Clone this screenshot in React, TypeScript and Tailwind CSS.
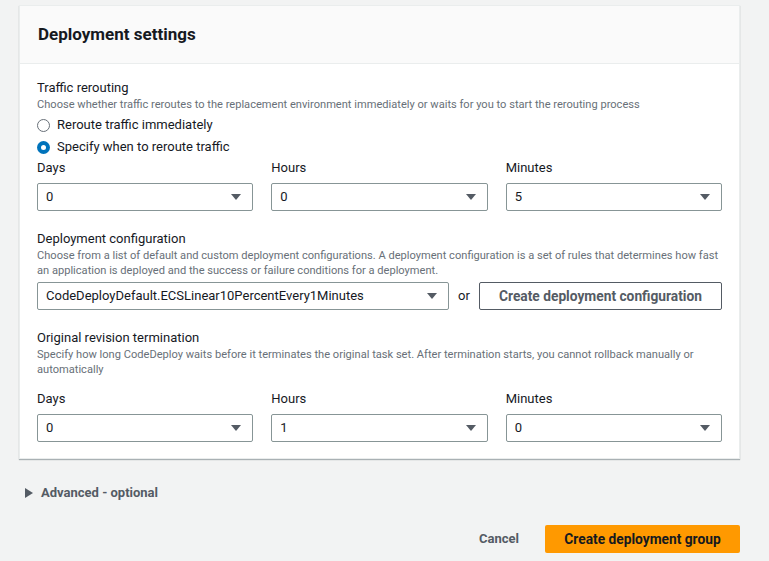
function Caret() {
  return (
    <svg width="12" height="8" viewBox="0 0 12 8" className="shrink-0">
      <path d="M1 1h10L6 7z" fill="#545b64" />
    </svg>
  );
}

function Select({ value, className = "" }: { value: string; className?: string }) {
  return (
    <div
      className={`flex h-[28px] items-center justify-between rounded-[2px] border border-[#879596] bg-white pl-[8px] pr-[10px] text-[13px] text-[#16191f] ${className}`}
    >
      <span>{value}</span>
      <Caret />
    </div>
  );
}

function TimeRow({ values, className = "" }: { values: string[]; className?: string }) {
  const labels = ["Days", "Hours", "Minutes"];
  return (
    <div className={`grid grid-cols-3 gap-x-[18px] ${className}`}>
      {labels.map((l, i) => (
        <div key={l}>
          <div className="h-[19px] pt-[1px] text-[13px] leading-[18px] text-[#16191f]">{l}</div>
          <Select value={values[i]} className="mt-[6px]" />
        </div>
      ))}
    </div>
  );
}

function Radio({ checked, label }: { checked?: boolean; label: string }) {
  return (
    <div className="flex h-[22px] items-center gap-[7px]">
      {checked ? (
        <span className="flex h-[13px] w-[13px] items-center justify-center rounded-full bg-[#0073bb]">
          <span className="h-[5px] w-[5px] rounded-full bg-white" />
        </span>
      ) : (
        <span className="h-[13px] w-[13px] rounded-full border border-[#687078] bg-white" />
      )}
      <span className="text-[13px] text-[#16191f]">{label}</span>
    </div>
  );
}

export default function App() {
  return (
    <main
      className="min-h-[561px] bg-[#f2f3f3] pl-[19px] pt-[5px]"
      style={{ fontFamily: "Roboto, 'Liberation Sans', sans-serif" }}
    >
      <section className="w-[721px] border border-[#eaeded] bg-white shadow-[0_1px_1px_0_rgba(0,28,36,0.3)]">
        <header className="flex h-[58px] items-center border-b border-[#eaeded] bg-[#fafafa] px-[18px]">
          <h2 className="text-[17px] font-bold text-[#16191f]">Deployment settings</h2>
        </header>

        <div className="px-[17px] pb-[16px] pt-[15px]">
          <div className="text-[13px] leading-[18px] text-[#16191f]">Traffic rerouting</div>
          <p className="text-[11.1px] leading-[15px] text-[#687078]">
            Choose whether traffic reroutes to the replacement environment immediately or waits for you to start the rerouting process
          </p>
          <div className="mt-[2px]">
            <Radio label="Reroute traffic immediately" />
            <Radio checked label="Specify when to reroute traffic" />
          </div>
          <TimeRow values={["0", "0", "5"]} />

          <div className="mt-[19px] text-[13px] leading-[18px] text-[#16191f]">Deployment configuration</div>
          <p className="text-[11.1px] leading-[15px] text-[#687078]">
            Choose from a list of default and custom deployment configurations. A deployment configuration is a set of rules that determines how fast an application is deployed and the success or failure conditions for a deployment.
          </p>
          <div className="mt-[4px] flex items-center">
            <Select value="CodeDeployDefault.ECSLinear10PercentEvery1Minutes" className="w-[412px]" />
            <span className="w-[30px] text-center text-[13px] text-[#16191f]">or</span>
            <button className="flex h-[28px] flex-1 items-center justify-center rounded-[2px] border border-[#545b64] bg-white text-[13.75px] font-bold text-[#545b64]">
              Create deployment configuration
            </button>
          </div>

          <div className="mt-[19px] text-[13px] leading-[18px] text-[#16191f]">Original revision termination</div>
          <p className="text-[11.1px] leading-[15px] text-[#687078]">
            Specify how long CodeDeploy waits before it terminates the original task set. After termination starts, you cannot rollback manually or automatically
          </p>
          <TimeRow values={["0", "1", "0"]} className="mt-[12px]" />
        </div>
      </section>

      <div className="mt-[25px] flex h-[18px] items-center gap-[8px] pl-[6px] text-[13px] font-bold text-[#545b64]">
        <svg width="8" height="10" viewBox="0 0 8 10">
          <path d="M0 0l8 5-8 5z" fill="#545b64" />
        </svg>
        <span>Advanced - optional</span>
      </div>

      <div className="mt-[23px] flex w-[721px] items-center justify-end">
        <button className="px-[20px] text-[13px] font-bold text-[#545b64]">Cancel</button>
        <button className="ml-[6px] h-[28px] w-[195px] rounded-[2px] bg-[#ff9900] text-[13.75px] font-bold text-[#16191f]">
          Create deployment group
        </button>
      </div>
    </main>
  );
}
